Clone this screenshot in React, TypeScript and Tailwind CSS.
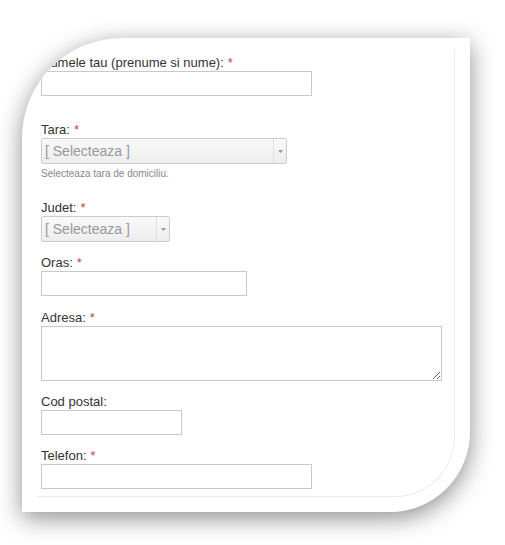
import React from 'react'

const font = { fontFamily: '"Liberation Sans", Arial, sans-serif' }

function Label({ text, required = true, className = '' }: { text: string; required?: boolean; className?: string }) {
  return (
    <label className={`block text-[13px] leading-[16px] text-[#333] whitespace-nowrap ${className}`}>
      {text}
      {required && <span className="ml-[4px] text-[#b94a48]">*</span>}
    </label>
  )
}

function TextInput({ className = '' }: { className?: string }) {
  return <input type="text" className={`block h-[25px] border border-[#c9c9c9] bg-white outline-none ${className}`} />
}

function Select({ className = '' }: { className?: string }) {
  return (
    <div
      className={`flex h-[26px] items-stretch rounded-[2px] border border-[#cccccc] bg-gradient-to-b from-[#fafafa] to-[#ededed] ${className}`}
    >
      <span className="flex flex-1 items-center pl-[3px] text-[14px] text-[#999]">[ Selecteaza ]</span>
      <span className="flex w-[13px] items-center justify-center border-l border-[#dedede]">
        <svg width="5" height="3" viewBox="0 0 5 3">
          <path d="M0 0h5L2.5 3z" fill="#9a9a9a" />
        </svg>
      </span>
    </div>
  )
}

export default function App() {
  return (
    <div className="min-h-[545px] w-[505px] bg-white pl-[22px] pt-[38px]" style={font}>
      <div className="h-[474px] w-[448px] overflow-hidden rounded-tl-[100px] rounded-br-[80px] bg-white pb-[15px] pl-[15px] pr-[15px] pt-[12px] shadow-[0_6px_24px_rgba(0,0,0,0.45)]">
        <div className="h-full rounded-br-[60px] border-b border-r border-[#ececec] pl-[4px] pt-[5px]">
          <Label text="Numele tau (prenume si nume):" />
          <TextInput className="w-[271px]" />

          <Label text="Tara:" className="mt-[26px]" />
          <Select className="w-[246px]" />
          <p className="mt-[3px] text-[10px] leading-[13px] text-[#888]">Selecteaza tara de domiciliu.</p>

          <Label text="Judet:" className="mt-[20px]" />
          <Select className="h-[25px] w-[129px]" />

          <Label text="Oras:" className="mt-[13px]" />
          <TextInput className="w-[206px]" />

          <Label text="Adresa:" className="mt-[14px]" />
          <textarea className="block h-[55px] w-[401px] border border-[#c9c9c9] bg-white outline-none" />

          <Label text="Cod postal:" required={false} className="mt-[13px]" />
          <TextInput className="w-[141px]" />

          <Label text="Telefon:" className="mt-[13px]" />
          <TextInput className="w-[271px]" />
        </div>
      </div>
    </div>
  )
}
